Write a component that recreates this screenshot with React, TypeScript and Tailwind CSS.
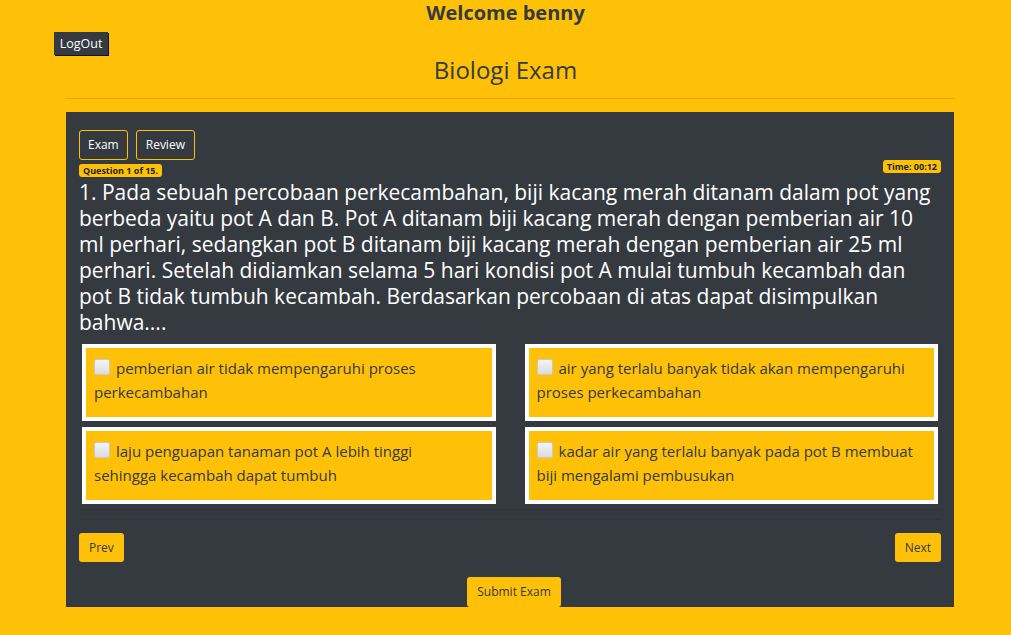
import React from "react";

// Exam page: header, question card with four answer options and nav buttons.

const QUESTION =
  "1. Pada sebuah percobaan perkecambahan, biji kacang merah ditanam dalam pot yang berbeda yaitu pot A dan B. Pot A ditanam biji kacang merah dengan pemberian air 10 ml perhari, sedangkan pot B ditanam biji kacang merah dengan pemberian air 25 ml perhari. Setelah didiamkan selama 5 hari kondisi pot A mulai tumbuh kecambah dan pot B tidak tumbuh kecambah. Berdasarkan percobaan di atas dapat disimpulkan bahwa....";

const OPTIONS = [
  "pemberian air tidak mempengaruhi proses perkecambahan",
  "air yang terlalu banyak tidak akan mempengaruhi proses perkecambahan",
  "laju penguapan tanaman pot A lebih tinggi sehingga kecambah dapat tumbuh",
  "kadar air yang terlalu banyak pada pot B membuat biji mengalami pembusukan",
];

function CheckBox() {
  return (
    <span className="mr-[6px] inline-block h-[16px] w-[16px] rounded-[2px] border border-[#c9c9c9] bg-gradient-to-b from-[#f4f4f4] to-[#dcdcdc] align-[-1px]" />
  );
}

export default function App() {
  return (
    <div className="min-h-[635px] bg-[#ffc107] font-['Open_Sans',sans-serif] text-[#343a40]">
      <h3 className="pt-[1px] text-center text-[20px] font-bold leading-[24px] text-[#343a40]">Welcome benny</h3>

      <div className="mt-[5px] pl-[54px]">
        <button
          type="button"
          className="h-[23px] w-[54px] bg-[#343a40] text-[12.5px] leading-[23px] text-white shadow-[1px_1px_0_#111]"
        >
          LogOut
        </button>
      </div>

      <h1 className="text-center text-[24px] leading-[30px] text-[#343a40]">Biologi Exam</h1>

      <div className="ml-[66px] mt-[13px] w-[888px] border-t border-[#e0a800]" />

      <div className="ml-[66px] mt-[13px] w-[888px] bg-[#343a40] px-[13px] pt-[18px]">
        <div className="flex gap-[8px]">
          <button
            type="button"
            className="h-[30px] rounded-[3px] border border-[#ffc107] px-[8px] text-[12px] text-white"
          >
            Exam
          </button>
          <button
            type="button"
            className="h-[30px] rounded-[3px] border border-[#ffc107] px-[9px] text-[12px] text-white"
          >
            Review
          </button>
        </div>

        <div className="flex items-start justify-between">
          <span className="mt-[4px] rounded-[3px] bg-[#ffc107] px-[4px] text-[9px] font-bold leading-[13px] text-[#212529]">
            Question 1 of 15.
          </span>
          <span className="rounded-[3px] bg-[#ffc107] px-[4px] text-[9px] font-bold leading-[13px] text-[#212529]">
            Time: 00:12
          </span>
        </div>

        <p className="mt-[2px] text-[21px] leading-[26px] text-white">{QUESTION}</p>

        <div className="mx-[3px] mt-[9px] grid grid-cols-2 gap-x-[29px] gap-y-[6px]">
          {OPTIONS.map((opt) => (
            <div key={opt} className="h-[77px] border-[4px] border-white bg-[#ffc107] pl-[8px] pr-[16px] pt-[8px]">
              <div className="text-[15px] leading-[24px] text-[#343a40]">
                <CheckBox />
                {opt}
              </div>
            </div>
          ))}
        </div>

        <div className="mt-[5px] border-t border-[#30353a]" />
        <div className="mt-[9px] border-t border-[#30353a]" />

        <div className="mt-[13px] flex justify-between">
          <button
            type="button"
            className="h-[29px] rounded-[3px] bg-[#ffc107] px-[10px] text-[12px] text-[#343a40]"
          >
            Prev
          </button>
          <button
            type="button"
            className="h-[29px] rounded-[3px] bg-[#ffc107] px-[10px] text-[12px] text-[#343a40]"
          >
            Next
          </button>
        </div>

        <div className="mt-[15px] flex justify-center">
          <button
            type="button"
            className="ml-[8px] h-[30px] rounded-[3px] bg-[#ffc107] px-[10px] text-[12px] text-[#343a40]"
          >
            Submit Exam
          </button>
        </div>
      </div>
    </div>
  );
}
